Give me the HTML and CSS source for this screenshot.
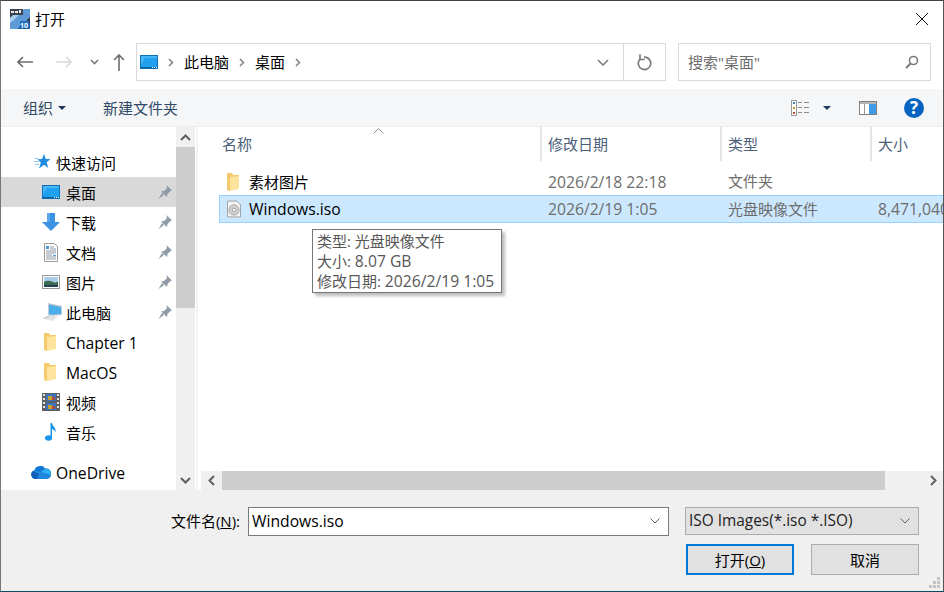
FILE: index.html
```html
<!DOCTYPE html>
<html lang="zh-CN">
<head>
    <meta charset="UTF-8">
    <title>打开</title>
    <link rel="stylesheet" href="styles.css">
</head>
<body>
    <svg class="defs" width="0" height="0">
        <symbol id="i-desktop" viewBox="0 0 18 14">
            <rect x=".5" y=".5" width="17" height="13" fill="#22a0f0" stroke="#0f6fb4"/>
            <path d="M1 1h16v2H5L1 10z" fill="#45b6f8"/>
            <path d="M1 12h16v1H1z" fill="#0c5f9e"/>
            <path d="M12 12h1v1h-1zM14 12h1v1h-1zM16 12h1v1h-1z" fill="#fff"/>
        </symbol>
        <symbol id="i-pin" viewBox="0 0 14 14">
            <path d="M8.500 0L14 5.500l-1.500.5-3 3-.5 3L3 6.500l3-.5 3-3z" fill="#8f9ca8"/>
            <path d="M4 8l2 2-5.500 4z" fill="#8f9ca8"/>
        </symbol>
        <symbol id="i-folder" viewBox="0 0 13 18">
            <path d="M0 0h5l1 2h6v14H3v2l-3-1z" fill="#f3cb6c"/>
            <path d="M3 4l9-1v13l-9 2z" fill="#fde39c"/>
        </symbol>
    </svg>

    <div class="dialog">
        <div class="titlebar">
            <svg class="app-icon" width="20" height="20" viewBox="0 0 20 20">
                <rect width="20" height="20" fill="#2e3a4c"/>
                <path d="M0 20V9L9 0h11v8L8 20z" fill="#5d9ad6"/>
                <path d="M9 0h5L4 11 0 14V9z" fill="#a9cdec"/>
                <path d="M0 0h13v6H0z" fill="#39424e"/>
                <path d="M1 2h3v2H1zM5 2h3v2H5zM9 1h2v3H9z" fill="#e8e8e8"/>
                <path d="M8 20l4-6h8v6z" fill="#1a5fa8"/>
                <rect x="10" y="12" width="9" height="7" fill="#1f6fc0"/>
                <text x="10" y="18.500" class="app-icon-text">10</text>
            </svg>
            <span class="title">打开</span>
            <svg class="close" width="14" height="14" viewBox="0 0 14 14">
                <path d="M1 1l12 12M13 1L1 13" stroke="#111" fill="none"/>
            </svg>
        </div>

        <div class="navbar">
            <svg class="nav-back" width="16" height="12" viewBox="0 0 16 12"><path d="M6 1L1 6l5 5M1 6h15" stroke="#6d6d6d" stroke-width="1.600" fill="none"/></svg>
            <svg class="nav-forward" width="16" height="12" viewBox="0 0 16 12"><path d="M10 1l5 5-5 5M15 6H0" stroke="#d9d9d9" stroke-width="1.600" fill="none"/></svg>
            <svg class="nav-recent" width="9" height="6" viewBox="0 0 9 6"><path d="M1 1l3.500 3.500L8 1" stroke="#7a7a7a" stroke-width="1.600" fill="none"/></svg>
            <svg class="nav-up" width="12" height="17" viewBox="0 0 12 17"><path d="M1 6l5-5 5 5M6 1v16" stroke="#6d6d6d" stroke-width="1.600" fill="none"/></svg>
            <div class="address">
                <div class="crumbs">
                    <svg class="crumb-icon" width="18" height="14"><use href="#i-desktop"/></svg>
                    <svg class="crumb-sep" width="6" height="9" viewBox="0 0 6 9"><path d="M1 1l3.500 3.500L1 8" stroke="#7f7f7f" stroke-width="1.500" fill="none"/></svg>
                    <span class="crumb">此电脑</span>
                    <svg class="crumb-sep" width="6" height="9" viewBox="0 0 6 9"><path d="M1 1l3.500 3.500L1 8" stroke="#7f7f7f" stroke-width="1.500" fill="none"/></svg>
                    <span class="crumb">桌面</span>
                    <svg class="crumb-sep" width="6" height="9" viewBox="0 0 6 9"><path d="M1 1l3.500 3.500L1 8" stroke="#7f7f7f" stroke-width="1.500" fill="none"/></svg>
                </div>
                <div class="address-drop">
                    <svg width="12" height="7" viewBox="0 0 12 7"><path d="M1 1l5 5 5-5" stroke="#7a7a7a" stroke-width="1.500" fill="none"/></svg>
                </div>
                <div class="address-refresh">
                    <svg width="16" height="17" viewBox="0 0 16 17"><path d="M7 3.200A6.200 6.200 0 1 1 2.700 5.500" stroke="#7a7a7a" stroke-width="1.700" fill="none"/><path d="M3 .5v5h4.800" stroke="#7a7a7a" stroke-width="1.700" fill="none"/></svg>
                </div>
            </div>
            <div class="search">
                <span class="crumb">搜索"桌面"</span>
                <svg width="14" height="14" viewBox="0 0 14 14"><circle cx="8.500" cy="5.500" r="4" stroke="#7a7a7a" stroke-width="1.600" fill="none"/><path d="M5.500 8.500L1 13" stroke="#7a7a7a" stroke-width="2"/></svg>
            </div>
        </div>

        <div class="toolbar">
            <span class="tool-organize">组织</span>
            <span class="caret"></span>
            <span class="tool-new">新建文件夹</span>
            <svg class="tool-view" width="18" height="16" viewBox="0 0 18 16">
                <rect x=".5" y=".5" width="5" height="15" fill="#fff" stroke="#9a9a9a"/>
                <path d="M2 2h2v2H2z" fill="#3a8cc8"/><path d="M2 7h2v2H2z" fill="#b9a032"/><path d="M2 12h2v2H2z" fill="#c8482a"/>
                <path d="M7 2.500h4M13 2.500h5M7 7.500h4M13 7.500h5M7 12.500h4M13 12.500h5" stroke="#8a8a8a"/>
            </svg>
            <span class="caret caret-view"></span>
            <svg class="tool-pane" width="18" height="14" viewBox="0 0 18 14">
                <rect x=".5" y=".5" width="17" height="13" fill="#fff" stroke="#808080"/>
                <rect x="1" y="1" width="16" height="2" fill="#b5b5b5"/>
                <rect x="10" y="3" width="7" height="10" fill="#3f9be8"/>
                <path d="M5.500 3v10" stroke="#9a9a9a"/>
            </svg>
            <span class="tool-help">?</span>
        </div>

        <div class="main">
            <div class="sidebar">
                <div class="tree">
                    <div class="tree-row tree-root">
                        <svg width="16" height="16" viewBox="0 0 16 16"><path d="M10 0l1.700 5H16.500l-3.800 3.200 1.500 5.800L10 10.800 5 14.500l1.800-6L3.500 5.300 8 5z" fill="#1c8be0"/><path d="M1 4.500h3M0 7.500h5M1 10.500h4" stroke="#8cc8f0"/></svg>
                        <span>快速访问</span>
                    </div>
                    <div class="tree-row active">
                        <svg width="18" height="14"><use href="#i-desktop"/></svg>
                        <span>桌面</span>
                        <svg class="pin" width="14" height="14"><use href="#i-pin"/></svg>
                    </div>
                    <div class="tree-row">
                        <svg width="18" height="18" viewBox="0 0 18 18"><path d="M5 0h8v9h5l-9 9-9-9h5z" fill="#3c93e4"/><path d="M5 0h3v9H5z" fill="#5aa9ee"/></svg>
                        <span>下载</span>
                        <svg class="pin" width="14" height="14"><use href="#i-pin"/></svg>
                    </div>
                    <div class="tree-row">
                        <svg width="18" height="19" viewBox="0 0 18 19"><path d="M2.500.5h10l3 3v15h-13z" fill="#fff" stroke="#9a9a9a"/><path d="M4 3h3v3H4z" fill="#4a9ad8"/><path d="M8 4h4M8 6h6M4 8h10M4 10h10M4 12h6M4 14h10M4 16h10" stroke="#8b9aa8"/><path d="M11 12h3v1h-3z" fill="#4a9ad8"/></svg>
                        <span>文档</span>
                        <svg class="pin" width="14" height="14"><use href="#i-pin"/></svg>
                    </div>
                    <div class="tree-row">
                        <svg width="18" height="14" viewBox="0 0 18 14"><rect x=".5" y=".5" width="17" height="13" fill="#fff" stroke="#9a9a9a"/><rect x="2" y="2" width="14" height="5" fill="#a9cdea"/><path d="M2 7c3-2 6-1 9 0s4 0 5-.5V12H2z" fill="#3d6b52"/><path d="M2 10h14v2H2z" fill="#24415a"/></svg>
                        <span>图片</span>
                        <svg class="pin" width="14" height="14"><use href="#i-pin"/></svg>
                    </div>
                    <div class="tree-row">
                        <svg class="pc-icon" width="20" height="18" viewBox="0 0 20 18"><path d="M6 0l14 3v9l-11 1-3-1z" fill="#c3cbd1"/><path d="M7 1.500l12 2.500v7l-10 .8-2-.6z" fill="#4aaeea"/><path d="M0 15.500L7 12l9 2-6 4z" fill="#dfe3e6"/><path d="M2 15.500l5-2.500" stroke="#b8bec3"/></svg>
                        <span>此电脑</span>
                        <svg class="pin" width="14" height="14"><use href="#i-pin"/></svg>
                    </div>
                    <div class="tree-row">
                        <svg class="tree-folder" width="13" height="18"><use href="#i-folder"/></svg>
                        <span class="lat">Chapter 1</span>
                    </div>
                    <div class="tree-row">
                        <svg class="tree-folder" width="13" height="18"><use href="#i-folder"/></svg>
                        <span class="lat">MacOS</span>
                    </div>
                    <div class="tree-row">
                        <svg width="18" height="18" viewBox="0 0 18 18"><rect width="18" height="18" fill="#5f5f5f"/><path d="M1 1h2v2H1zM1 5h2v2H1zM1 9h2v2H1zM1 13h2v2H1zM15 1h2v2h-2zM15 5h2v2h-2zM15 9h2v2h-2zM15 13h2v2h-2z" fill="#e6e6e6"/><rect x="4" y="1" width="10" height="7" fill="#3a74c4"/><rect x="4" y="10" width="10" height="7" fill="#3a74c4"/><path d="M6 3h4v4H6zM6 12h4v4H6z" fill="#c8a02c"/><path d="M10 4h3v3h-3zM10 13h3v3h-3z" fill="#b84a32"/></svg>
                        <span>视频</span>
                    </div>
                    <div class="tree-row">
                        <svg width="18" height="18" viewBox="0 0 18 18"><ellipse cx="6.500" cy="15" rx="3.500" ry="2.800" fill="#1a94ec"/><path d="M8.500 0H10c.5 3.500 4.500 4.500 3.500 9.500C13 7.500 11.500 6.500 10 6v9H8.500z" fill="#1a94ec"/></svg>
                        <span>音乐</span>
                    </div>
                    <div class="tree-row tree-root tree-drive">
                        <svg width="20" height="14" viewBox="0 0 20 14"><path d="M4.500 14a4.500 4.500 0 0 1-1-8.800A6 6 0 0 1 14 3.500 5 5 0 0 1 20 9.500 4.500 4.500 0 0 1 16 14z" fill="#1f86dc"/><path d="M4 14a4.500 4.500 0 0 1-2-8L8 9l-2 5z" fill="#0f5fb8"/><path d="M3.500 5.200A6 6 0 0 1 14 3.500L9.500 7z" fill="#0f78d4"/><path d="M9.500 7L14 4.200A5 5 0 0 1 20 10z" fill="#2cb0f0"/></svg>
                        <span class="lat">OneDrive</span>
                    </div>
                </div>
                <div class="vscroll">
                    <div class="scroll-btn">
                        <svg width="11" height="7" viewBox="0 0 11 7"><path d="M1 6l4.500-4.500L10 6" stroke="#606060" stroke-width="2" fill="none"/></svg>
                    </div>
                    <div class="vtrack"><div class="vthumb"></div></div>
                    <div class="scroll-btn">
                        <svg width="11" height="7" viewBox="0 0 11 7"><path d="M1 1l4.500 4.500L10 1" stroke="#606060" stroke-width="2" fill="none"/></svg>
                    </div>
                </div>
            </div>

            <div class="files">
                <div class="file-pane">
                    <svg class="sort-arrow" width="11" height="6" viewBox="0 0 11 6"><path d="M.5 5.500l5-5 5 5" stroke="#8a8a8a" fill="none"/></svg>
                    <div class="cols col-head">
                        <div class="cell">名称</div>
                        <div class="cell">修改日期</div>
                        <div class="cell">类型</div>
                        <div class="cell">大小</div>
                    </div>
                    <div class="cols file-row">
                        <div class="cell cell-name">
                            <svg width="13" height="18"><use href="#i-folder"/></svg>
                            <span>素材图片</span>
                        </div>
                        <div class="cell lat">2026/2/18 22:18</div>
                        <div class="cell cell-type">文件夹</div>
                        <div class="cell"></div>
                    </div>
                    <div class="cols file-row selected">
                        <div class="cell cell-name">
                            <svg class="iso-icon" width="14" height="18" viewBox="0 0 15 18">
                                <path d="M.5.500h10l4 4v13H.5z" fill="#f4f4f4" stroke="#9b9b9b"/>
                                <circle cx="7.500" cy="10" r="5.500" fill="#cfcfcf" stroke="#a8a8a8"/>
                                <circle cx="7.500" cy="10" r="1.800" fill="#fff" stroke="#a0a0a0"/>
                            </svg>
                            <span class="lat">Windows.iso</span>
                        </div>
                        <div class="cell lat">2026/2/19 1:05</div>
                        <div class="cell cell-type">光盘映像文件</div>
                        <div class="cell lat">8,471,040</div>
                    </div>
                    <div class="tooltip">
                        <div>类型: 光盘映像文件</div>
                        <div>大小: <span class="lat">8.07 GB</span></div>
                        <div>修改日期: <span class="lat">2026/2/19 1:05</span></div>
                    </div>
                </div>
                <div class="hscroll">
                    <div class="scroll-btn hbtn">
                        <svg width="7" height="11" viewBox="0 0 7 11"><path d="M6 1L1.500 5.500 6 10" stroke="#606060" stroke-width="2" fill="none"/></svg>
                    </div>
                    <div class="hthumb"></div>
                    <div class="scroll-btn hbtn hbtn-end">
                        <svg width="7" height="11" viewBox="0 0 7 11"><path d="M1 1l4.500 4.500L1 10" stroke="#606060" stroke-width="2" fill="none"/></svg>
                    </div>
                </div>
            </div>
        </div>

        <div class="footer">
            <label class="name-label">文件名(<u>N</u>):</label>
            <div class="name-input">
                <span class="lat">Windows.iso</span>
                <svg width="10" height="6" viewBox="0 0 10 6"><path d="M.5.500L5 5 9.500.500" stroke="#606060" fill="none"/></svg>
            </div>
            <div class="type-select">
                <span>ISO Images(*.iso *.ISO)</span>
                <svg width="10" height="6" viewBox="0 0 10 6"><path d="M.5.500L5 5 9.500.500" stroke="#606060" fill="none"/></svg>
            </div>
            <button class="btn btn-default">打开(<u>O</u>)</button>
            <button class="btn">取消</button>
            <svg class="grip" width="12" height="12" viewBox="0 0 12 12"><path d="M8 0h3v3H8zM4 4h3v3H4zM8 4h3v3H8zM0 8h3v3H0zM4 8h3v3H4zM8 8h3v3H8z" fill="#c4c4c4"/></svg>
        </div>
    </div>
</body>
</html>
```

FILE: styles.css
```css
* {
    box-sizing: border-box;
}
body {
    margin: 0;
    font-family: "Open Sans", "Noto Sans CJK SC", sans-serif;
    font-size: 15px;
    color: #000;
    overflow: hidden;
}
.defs {
    position: absolute;
}
svg {
    display: block;
    flex: none;
}
.lat {
    font-size: 15.7px;
}
.dialog {
    width: 944px;
    height: 592px;
    display: flex;
    flex-direction: column;
    background: #fff;
    border: 1px solid #555;
    border-left-color: #777;
    border-bottom-color: #0e4a5e;
    border-top-color: #444;
    position: relative;
}

/* title */
.titlebar {
    height: 37px;
    display: flex;
    align-items: center;
    padding: 0 14px 2px 9px;
}
.app-icon-text {
    font-size: 7px;
    font-weight: bold;
    fill: #fff;
}
.title {
    margin-left: 5px;
    flex: 1;
}

/* nav */
.navbar {
    height: 51px;
    display: flex;
    align-items: flex-start;
    padding-top: 5px;
}
.nav-back {
    margin: 13px 0 0 16px;
}
.nav-forward {
    margin: 13px 0 0 23px;
}
.nav-recent {
    margin: 16px 0 0 18px;
}
.nav-up {
    margin: 11px 0 0 14px;
}
.address {
    width: 530px;
    height: 38px;
    margin-left: 11px;
    display: flex;
    align-items: stretch;
    border: 1px solid #d9d9d9;
}
.crumbs {
    flex: 1;
    display: flex;
    align-items: center;
    padding-left: 3px;
}
.crumb {
    margin-top: -1px;
}
.crumb-sep {
    margin: 0 10px;
}
.address-drop {
    width: 42px;
    display: flex;
    align-items: center;
    justify-content: center;
    border-right: 1px solid #d9d9d9;
}
.address-refresh {
    width: 41px;
    display: flex;
    align-items: center;
    justify-content: center;
}
.search {
    width: 253px;
    height: 38px;
    margin-left: 12px;
    display: flex;
    align-items: center;
    justify-content: space-between;
    padding: 0 11px 0 9px;
    border: 1px solid #d9d9d9;
    color: #6d6d6d;
}

/* toolbar */
.toolbar {
    height: 38px;
    display: flex;
    align-items: center;
    background: #f5f6f7;
    color: #2f4a68;
    border-bottom: 1px solid #eceef0;
}
.tool-organize {
    margin-left: 22px;
}
.caret {
    width: 0;
    height: 0;
    margin-left: 5px;
    border: 4px solid transparent;
    border-top: 4px solid #1f3a5a;
    border-bottom: 0;
}
.tool-new {
    margin-left: 37px;
}
.tool-view {
    margin-left: 613px;
}
.caret-view {
    margin-left: 14px;
}
.tool-pane {
    margin-left: 28px;
}
.tool-help {
    width: 20px;
    height: 20px;
    margin-left: 27px;
    border-radius: 50%;
    background: #0563c1;
    color: #fff;
    font-weight: bold;
    font-size: 17px;
    line-height: 20px;
    text-align: center;
}

/* main */
.main {
    flex: 1;
    min-height: 0;
    display: flex;
}
.sidebar {
    width: 197px;
    display: flex;
    border-right: 2px solid #f3f3f3;
}
.tree {
    width: 175px;
    padding-top: 20px;
    overflow: hidden;
}
.tree-row {
    height: 30px;
    display: flex;
    align-items: center;
    padding-left: 41px;
    gap: 6px;
}
.tree-row > span {
    flex: 1;
}
.tree-row > .lat {
    padding-top: 2px;
}
.tree-folder {
    margin: 0 3px 0 2px;
}
.pc-icon {
    margin-right: -2px;
}
.tree-root {
    padding-left: 33px;
}
.tree-drive {
    margin-top: 10px;
    padding-left: 30px;
    gap: 5px;
}
.tree-row.active {
    background: #d9d9d9;
}
.pin {
    margin-right: 4px;
}
.vscroll {
    width: 19px;
    display: flex;
    flex-direction: column;
    background: #f0f0f0;
}
.scroll-btn {
    height: 20px;
    display: flex;
    align-items: center;
    justify-content: center;
    flex: none;
}
.vtrack {
    flex: 1;
}
.vthumb {
    height: 161px;
    background: #cdcdcd;
}
.files {
    flex: 1;
    min-width: 0;
    display: flex;
    flex-direction: column;
    padding-left: 3px;
}
.file-pane {
    flex: 1;
    position: relative;
    overflow: hidden;
}
.sort-arrow {
    position: absolute;
    left: 172px;
    top: 1px;
}
.cols {
    display: grid;
    grid-template-columns: 322px 180px 150px 100px;
    margin-left: 18px;
    white-space: nowrap;
}
.cell {
    padding-left: 6px;
}
.col-head {
    height: 33px;
    margin-left: 16px;
    color: #4c607a;
    grid-template-columns: 325px 180px 150px 100px;
}
.col-head .cell {
    line-height: 34px;
    border-right: 2px solid #e5e5e5;
}
.col-head .cell:first-child {
    padding-left: 5px;
}
.file-row {
    height: 28px;
    align-items: center;
    color: #6d6d6d;
    border: 1px solid transparent;
    border-right: 0;
}
.col-head + .file-row {
    margin-top: 8px;
    height: 27px;
}
.file-row.selected {
    background: #cce8ff;
    border-color: #99d1ff;
}
.cell-type {
    padding-bottom: 2px;
}
.cell-name {
    display: flex;
    align-items: center;
    gap: 8px;
    color: #000;
}
.cell-name svg {
    margin-left: 1px;
}
.col-head + .file-row .cell-name {
    gap: 9px;
}
.tooltip {
    position: absolute;
    left: 111px;
    top: 102px;
    width: 190px;
    height: 64px;
    padding: 1px 4px;
    border: 1px solid #767676;
    background: #fff;
    color: #575757;
    line-height: 20px;
    white-space: nowrap;
    box-shadow: 3px 3px 3px #bdbdbd;
}
.hscroll {
    height: 19px;
    display: flex;
    background: #f0f0f0;
    flex: none;
}
.hbtn {
    width: 21px;
    height: 19px;
}
.hthumb {
    width: 663px;
    background: #cdcdcd;
}
.hbtn-end {
    margin-left: auto;
    width: 19px;
}

/* footer */
.footer {
    height: 101px;
    flex: none;
    background: #f0f0f0;
    display: grid;
    grid-template-columns: 421px 17px 108px 17px 108px;
    grid-template-rows: 29px 31px;
    row-gap: 8px;
    padding: 17px 0 0 247px;
    position: relative;
}
.name-label {
    position: absolute;
    right: 703px;
    top: 20px;
}
.name-input {
    grid-column: 1;
    grid-row: 1;
    display: flex;
    align-items: center;
    justify-content: space-between;
    padding: 0 8px 1px 3px;
    background: #fff;
    border: 1px solid #7a7a7a;
}
.type-select {
    grid-column: 3 / 6;
    grid-row: 1;
    margin-left: -1px;
    display: flex;
    align-items: center;
    justify-content: space-between;
    padding: 0 8px 1px 3px;
    background: #e1e1e1;
    border: 1px solid #adadad;
    height: 28px;
    font-size: 15.4px;
    color: #222;
}
.btn {
    grid-row: 2;
    font: inherit;
    color: #000;
    padding: 0;
    background: #e1e1e1;
    border: 1px solid #adadad;
}
.btn-default {
    grid-column: 3;
    border: 2px solid #0078d7;
}
.btn + .btn {
    grid-column: 5;
}
.grip {
    position: absolute;
    right: 2px;
    bottom: 2px;
}
```
